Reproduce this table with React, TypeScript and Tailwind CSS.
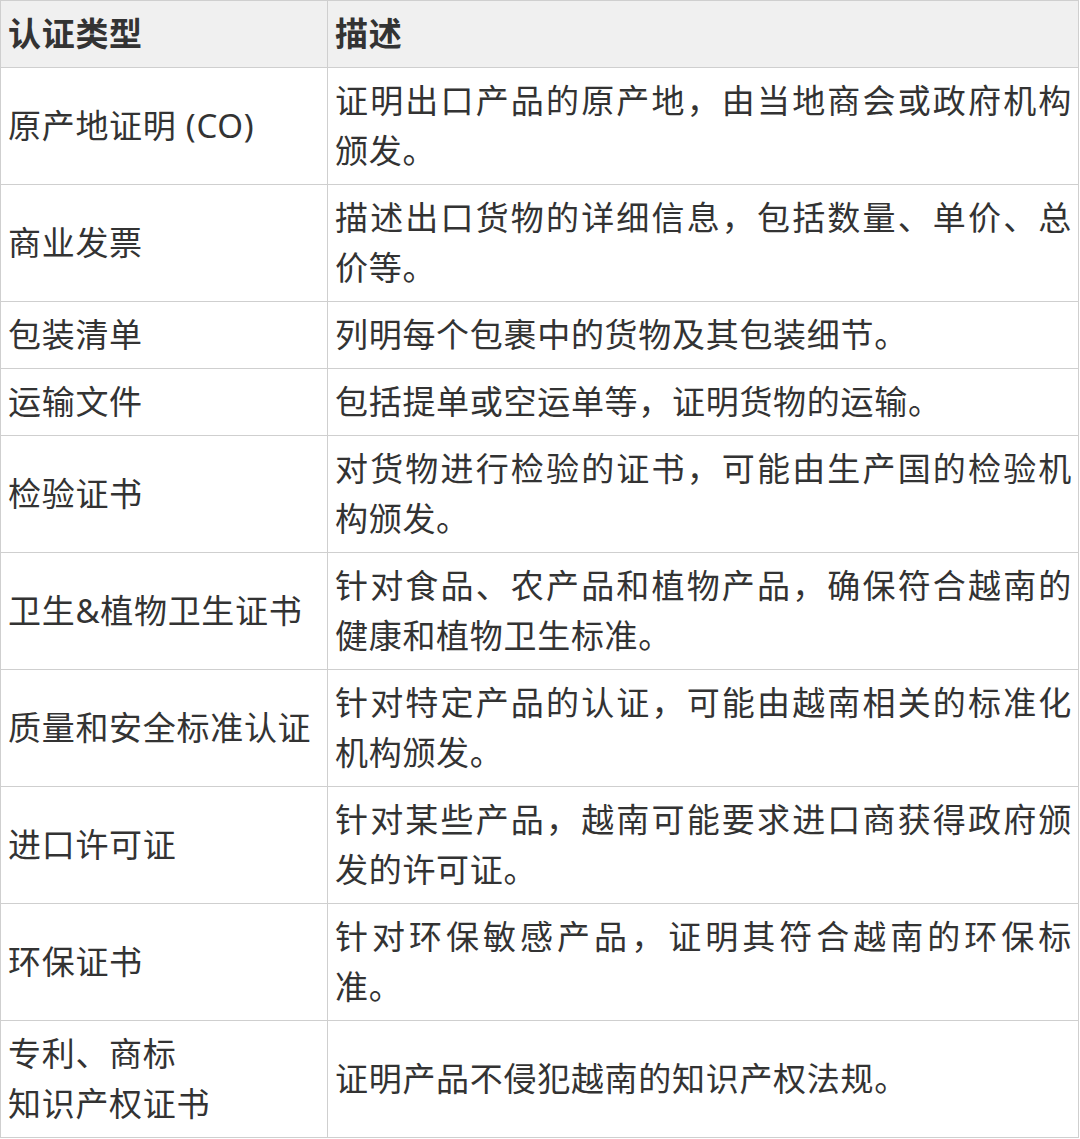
import React from 'react';

const rows: { type: string[]; desc: string[] }[] = [
  { type: ['原产地证明 (CO)'], desc: ['证明出口产品的原产地，由当地商会或政府机构', '颁发。'] },
  { type: ['商业发票'], desc: ['描述出口货物的详细信息，包括数量、单价、总', '价等。'] },
  { type: ['包装清单'], desc: ['列明每个包裹中的货物及其包装细节。'] },
  { type: ['运输文件'], desc: ['包括提单或空运单等，证明货物的运输。'] },
  { type: ['检验证书'], desc: ['对货物进行检验的证书，可能由生产国的检验机', '构颁发。'] },
  { type: ['卫生&植物卫生证书'], desc: ['针对食品、农产品和植物产品，确保符合越南的', '健康和植物卫生标准。'] },
  { type: ['质量和安全标准认证'], desc: ['针对特定产品的认证，可能由越南相关的标准化', '机构颁发。'] },
  { type: ['进口许可证'], desc: ['针对某些产品，越南可能要求进口商获得政府颁', '发的许可证。'] },
  { type: ['环保证书'], desc: ['针对环保敏感产品，证明其符合越南的环保标', '准。'] },
  { type: ['专利、商标', '知识产权证书'], desc: ['证明产品不侵犯越南的知识产权法规。'] },
];

// wrapped description lines are justified to the cell edge, last line is not
const Desc = ({ lines }: { lines: string[] }) => (
  <>
    {lines.map((l, i) => (
      <div
        key={i}
        className={
          i < lines.length - 1
            ? "whitespace-nowrap text-justify [text-align-last:justify] pr-[2px]"
            : "whitespace-nowrap"
        }
      >
        {l}
      </div>
    ))}
  </>
);

const Type = ({ lines }: { lines: string[] }) => (
  <>
    {lines.map((l, i) => (
      <div key={i} className="whitespace-nowrap">
        {l}
      </div>
    ))}
  </>
);

export default function App() {
  return (
    <div className="bg-white w-[1080px] h-[1139px] font-['Noto_Sans','Noto_Sans_CJK_SC',sans-serif] text-[33px] leading-[50px] tracking-[0.7px] text-[#333]">
      <table className="w-[1079px] border-collapse table-fixed">
        <colgroup>
          <col className="w-[327px]" />
          <col />
        </colgroup>
        <thead>
          <tr className="bg-[#f0f0f0]">
            <th className="border border-[#cfcfcf] pl-[7px] pr-[4px] py-[8px] text-left font-bold">认证类型</th>
            <th className="border border-[#cfcfcf] pl-[7px] pr-[4px] py-[8px] text-left font-bold">描述</th>
          </tr>
        </thead>
        <tbody>
          {rows.map((r, i) => (
            <tr key={i}>
              <td className="border border-[#cfcfcf] pl-[7px] pr-[4px] py-[8px] align-middle">
                <Type lines={r.type} />
              </td>
              <td className="border border-[#cfcfcf] pl-[7px] pr-[4px] py-[8px] align-middle">
                <Desc lines={r.desc} />
              </td>
            </tr>
          ))}
        </tbody>
      </table>
    </div>
  );
}
